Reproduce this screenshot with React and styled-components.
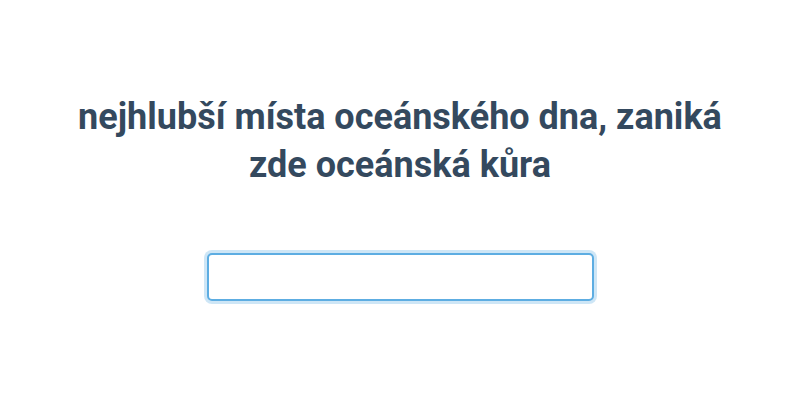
import React from "react";
import styled, { createGlobalStyle } from "styled-components";

const GlobalStyle = createGlobalStyle`
  html, body {
    margin: 0;
    padding: 0;
    background: #fff;
    font-family: Roboto, "Liberation Sans", sans-serif;
  }
`;

const Page = styled.div`
  height: 400px;
  box-sizing: border-box;
  padding-bottom: 6px;
  display: flex;
  flex-direction: column;
  align-items: center;
  justify-content: center;
`;

const Title = styled.h1`
  margin: 0 0 64px;
  max-width: 690px;
  text-align: center;
  font-size: 36px;
  line-height: 48px;
  font-weight: 700;
  color: #34495e;
`;

const Input = styled.input`
  box-sizing: border-box;
  width: 387px;
  height: 48px;
  border: 2px solid #5dade2;
  border-radius: 5px;
  box-shadow: 0 0 0 3px rgba(93, 173, 226, 0.3);
  outline: none;
  padding: 0 12px;
  font-size: 18px;
  font-family: inherit;
`;

const App = () => {
  return (
    <Page>
      <GlobalStyle />
      <Title>nejhlubší místa oceánského dna, zaniká zde oceánská kůra</Title>
      <Input type="text" />
    </Page>
  );
};

export default App;
